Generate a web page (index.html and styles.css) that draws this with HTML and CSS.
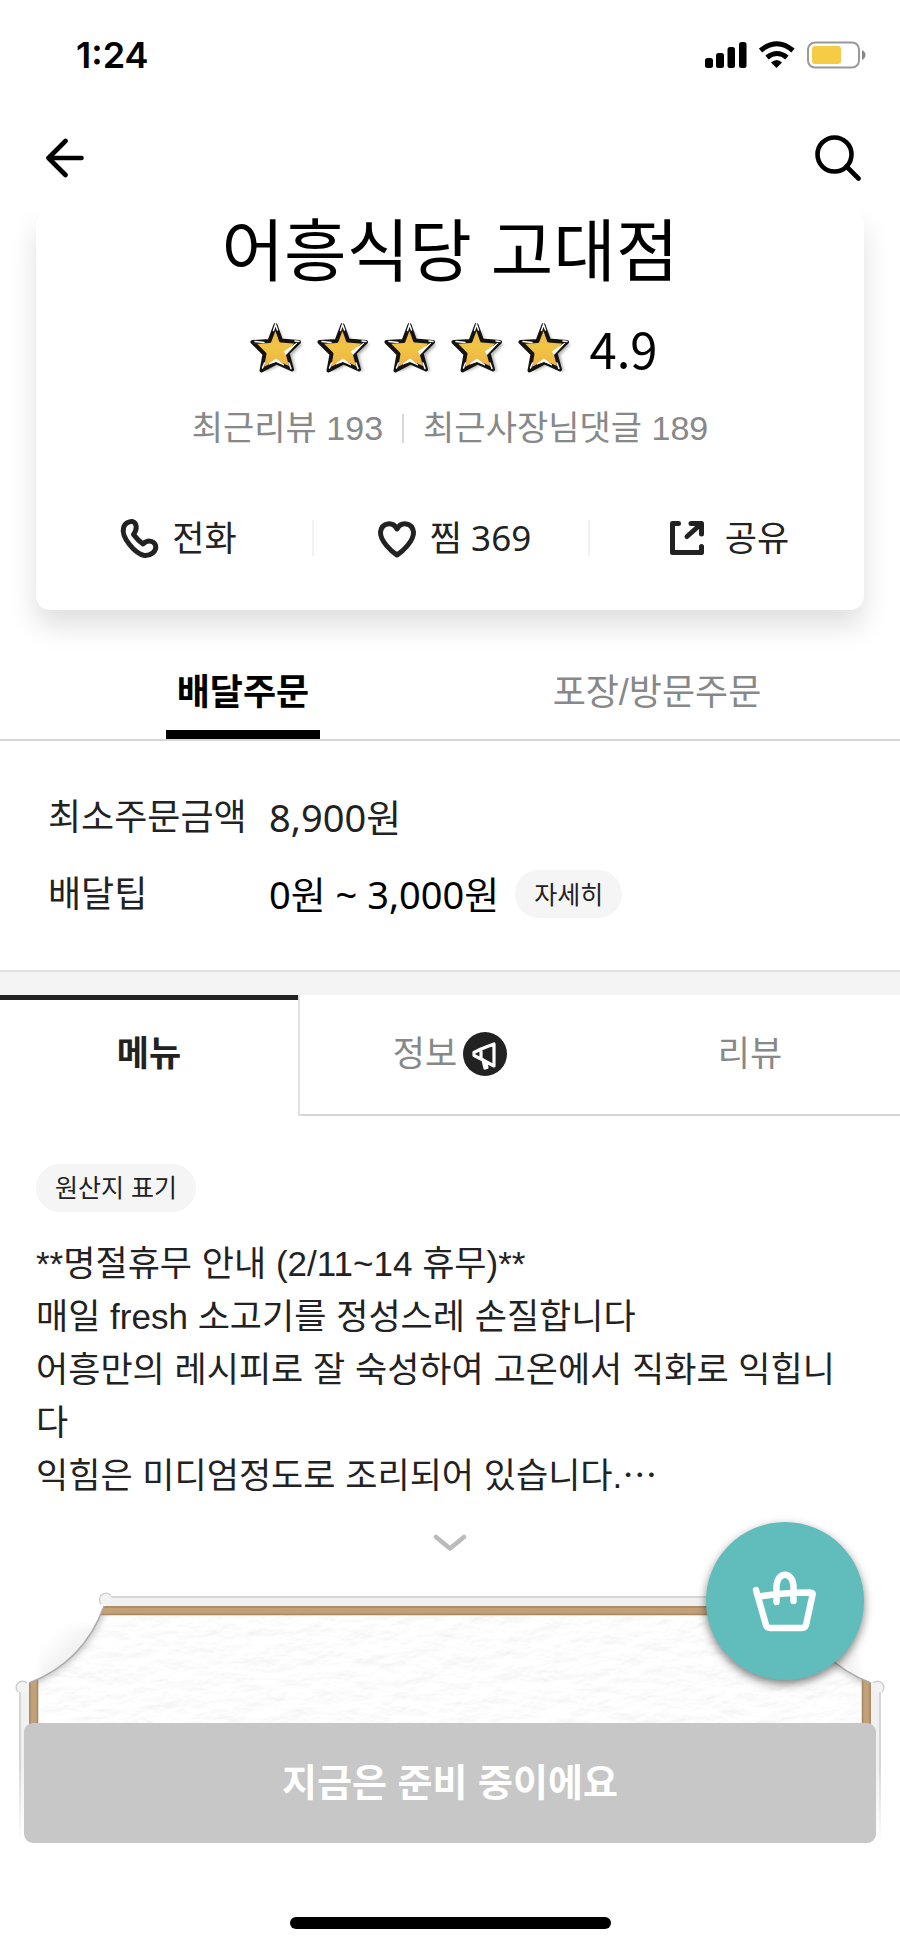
FILE: index.html
```html
<!DOCTYPE html>
<html lang="ko">
<head>
<meta charset="utf-8">
<meta name="viewport" content="width=device-width, initial-scale=1">
<title>어흥식당 고대점</title>
<link rel="stylesheet" href="styles.css">
</head>
<body>
<svg class="defs" aria-hidden="true">
  <defs>
    <linearGradient id="gold" x1="0" y1="0" x2="0" y2="1"><stop offset="0" stop-color="#f0b44c"/><stop offset=".5" stop-color="#efc443"/><stop offset="1" stop-color="#efae48"/></linearGradient>
    <filter id="soft" x="-30%" y="-30%" width="160%" height="160%"><feGaussianBlur stdDeviation="1.5"/></filter>
    <symbol id="star" viewBox="0 0 54 54">
      <path d="M26 6 32 20 50 21 39 32 43 49 27 42 12 49 16 33 4 22 21 21Z" fill="#777" opacity=".6" filter="url(#soft)" transform="translate(3 2)"/>
      <path d="M25.500 4 31 19.500 49 21 37.500 32 42 48.500 26.500 41.500 11.500 49.500 14.500 33 2.500 21 19.500 20Z" fill="url(#gold)" stroke="#151310" stroke-width="4" stroke-linejoin="round"/>
      <path d="M47 22 34.500 30.500 36 33.500ZM26 38 19 43 26 40.500 34 44Z" fill="#fff" stroke="#fff" stroke-linejoin="round"/>
      <path d="M23.500 9.500 25.500 3.500 27.500 9M5 20.500 14 21.500M45 20 49 20.500M12.500 47 14.500 42M41 47.500 39 42" fill="none" stroke="#fff" stroke-width="1.500" stroke-linecap="round"/>
    </symbol>
  </defs>
</svg>

<header class="top">
  <div class="status">
    <span class="time">1:24</span>
    <svg class="status-icons" viewBox="0 0 162 28" aria-hidden="true">
      <g fill="#000"><rect x="0" y="17" width="8" height="10" rx="2.500"/><rect x="11" y="12" width="8" height="15" rx="2.500"/><rect x="22.500" y="6" width="7.500" height="21" rx="2.500"/><rect x="34" y="1" width="7.500" height="26" rx="2.500"/></g>
      <g fill="none" stroke="#000" stroke-width="5"><path d="M55.500 9.500Q72 -4 88 9.500"/><path d="M62 16.500Q72 8.500 82 16.500"/></g>
      <path d="M66 21.500Q72 16.500 77 21.500L71.500 27Z"/>
      <rect x="103" y="1.500" width="51" height="25" rx="7" fill="#fff" stroke="#999" stroke-width="2"/>
      <rect x="107" y="5" width="29" height="18" rx="3" fill="#f6cc46"/>
      <path d="M157 9Q160.500 11 160.500 14T157 19Z" fill="#888"/>
    </svg>
  </div>
  <div class="nav">
    <button class="icon-btn" aria-label="뒤로">
      <svg width="40" height="40" viewBox="0 0 40 40" fill="none" stroke="#000" stroke-width="4.600" stroke-linecap="round" stroke-linejoin="round"><path d="M36.500 20H3.500M20.500 3 3.500 20 20.500 37"/></svg>
    </button>
    <button class="icon-btn" aria-label="검색">
      <svg width="46" height="46" viewBox="0 0 46 46" fill="none" stroke="#000" stroke-width="4.600" stroke-linecap="round"><circle cx="19.500" cy="19.500" r="17"/><path d="M31.500 31.500 43.500 43.500"/></svg>
    </button>
  </div>
</header>

<main>
  <section class="card">
    <h1>어흥식당 고대점</h1>
    <div class="rating">
      <svg class="star"><use href="#star"/></svg><svg class="star"><use href="#star"/></svg><svg class="star"><use href="#star"/></svg><svg class="star"><use href="#star"/></svg><svg class="star"><use href="#star"/></svg>
      <span class="score">4.9</span>
    </div>
    <div class="reviews"><span>최근리뷰 193</span><i class="bar"></i><span>최근사장님댓글 189</span></div>
    <div class="actions">
      <button><svg viewBox="0 0 48 48"><path d="M8.500 14C9.500 9 15 7 17.500 7.500 22 9 22.500 15 18.500 20.500Q23 26.500 28 30C32 26 38 26 40.500 31 42 38 35 42 29.500 41.500 20 40 6 23 8.500 14Z"/></svg>전화</button>
      <button><svg viewBox="0 0 48 48"><path d="M24 41C19 38 7 27 7.500 18 9 8 20 7.500 24 15 28 7.500 39 8 40.500 18 41 27 29 38 24 41Z"/></svg>찜 369</button>
      <button class="share"><svg viewBox="0 0 48 48"><path d="M15.500 9.500H9.500V38.500H38.500V32.500M28 9.500H38.500V20M24 22.500 38 10"/></svg>공유</button>
    </div>
  </section>

  <nav class="order-tabs">
    <button class="on">배달주문</button>
    <button>포장/방문주문</button>
  </nav>

  <dl class="info">
    <dt>최소주문금액</dt><dd>8,900원</dd>
    <dt>배달팁</dt><dd class="strong">0원 ~ 3,000원 <button class="pill">자세히</button></dd>
  </dl>

  <nav class="menu-tabs">
    <button class="on">메뉴</button>
    <button>정보
      <svg width="44" height="44" viewBox="0 0 44 44" aria-hidden="true"><circle cx="22" cy="22" r="22" fill="#222"/><g fill="none" stroke="#fff" stroke-width="3.200" stroke-linejoin="round" stroke-linecap="round"><path d="M31 12V34L18 27 11 23.500V20.500L18 17ZM18 17V27M20 28 22 36 24 35.500 22.500 30"/></g></svg>
    </button>
    <button>리뷰</button>
  </nav>

  <section class="notice">
    <button class="pill">원산지 표기</button>
    <p>**명절휴무 안내 (2/11~14 휴무)**<br>매일 fresh 소고기를 정성스레 손질합니다<br>어흥만의 레시피로 잘 숙성하여 고온에서 직화로 익힙니다<br>익힘은 미디엄정도로 조리되어 있습니다.⋯</p>
    <button class="more" aria-label="더보기"><svg width="34" height="18" viewBox="0 0 34 18" fill="none" stroke="#bbb" stroke-width="4.500" stroke-linecap="round" stroke-linejoin="round"><path d="M3 3 17 14.500 31 3"/></svg></button>
  </section>

  <svg class="frame" viewBox="0 0 900 260" aria-hidden="true">
    <defs>
      <filter id="paper" x="0" y="0" width="100%" height="100%">
        <feTurbulence type="fractalNoise" baseFrequency=".035 .07" numOctaves="4" seed="6" result="n"/>
        <feDiffuseLighting in="n" surfaceScale=".7" diffuseConstant="1.110" lighting-color="#fff"><feDistantLight azimuth="250" elevation="62"/></feDiffuseLighting>
        <feComposite in2="SourceGraphic" operator="in"/>
      </filter>
      <filter id="blur" x="-30%" y="-30%" width="160%" height="160%"><feGaussianBlur stdDeviation="3"/></filter>
      <clipPath id="sheet"><path d="M104 16H796Q816 72 871 93V260H29V93Q84 72 104 16Z"/></clipPath>
      <linearGradient id="haze" x1="0" y1="0" x2="1" y2="1"><stop offset=".2" stop-color="#efefef" stop-opacity="0"/><stop offset=".6" stop-color="#efefef"/></linearGradient>
      <clipPath id="cut"><path d="M104 16Q84 72 29 93V16Z"/></clipPath>
      <g id="side">
        <g clip-path="url(#cut)"><path d="M40 36H96V90H40Z" fill="url(#haze)" filter="url(#blur)"/></g>
        <path d="M29 93V260H38V89Z" fill="#c2a178"/><path d="M30 93V260M37.500 90V260" stroke="#a58863" stroke-width="1.500"/>
        <path d="M19 97V260H29V93Z" fill="#f1f1f1"/><path d="M20 102V260" stroke="#d6d6d6" stroke-width="2"/>
        <circle cx="22" cy="97" r="5.500" fill="#f3f3f3"/><path d="M18 102A6 6 0 0 1 27 93" fill="none" stroke="#d0d0d0" stroke-width="1.500"/>
        <circle cx="105.500" cy="9" r="6" fill="#f3f3f3"/><path d="M101 14A6 6 0 0 1 111 5.500" fill="none" stroke="#d0d0d0" stroke-width="1.500"/>
        <path d="M104 16Q84 72 29 93" fill="none" stroke="#aaa" stroke-width="1.500"/>
      </g>
    </defs>
    <g clip-path="url(#sheet)">
      <rect x="29" y="16" width="842" height="244" fill="#fff" filter="url(#paper)"/>
      <path d="M104 16Q84 72 29 93M796 16Q816 72 871 93" fill="none" stroke="#888" stroke-width="6" opacity=".5" filter="url(#blur)"/>
      <path d="M90 16H810V25H90Z" fill="#c2a178"/><path d="M90 17H810M90 24.500H810" stroke="#a58863" stroke-width="1.500"/>
    </g>
    <path d="M106 6H794V16H106Z" fill="#f1f1f1"/><path d="M110 7H790" stroke="#d6d6d6" stroke-width="2"/>
    <use href="#side"/><use href="#side" transform="translate(900 0) scale(-1 1)"/>
  </svg>
</main>

<div class="dock">
  <button class="fab" aria-label="장바구니">
    <svg width="66" height="66" viewBox="0 0 66 66" fill="none" stroke="#fff" stroke-width="6.400" stroke-linecap="round" stroke-linejoin="round"><path d="M4 22 14 57Q15 60 18 60H50Q53 60 54 57L60.500 27Q61.500 24.500 58 24.500 32 24.500 7 28.500M24.500 34V18C25.500 3 40.500 3 41.500 18V33"/></svg>
  </button>
  <button class="closed" disabled>지금은 준비 중이에요</button>
  <div class="home"></div>
</div>
</body>
</html>
```
FILE: styles.css
```css
* { box-sizing: border-box; }
body {
  margin: 0;
  min-height: 100vh;
  background: #fff;
  color: #222;
  font-family: "Liberation Sans", "Noto Sans CJK KR", sans-serif;
  font-size: 35px;
  line-height: 44px;
}
button {
  margin: 0;
  padding: 0;
  border: 0;
  background: none;
  color: inherit;
  font: inherit;
}
svg { display: block; }
.defs { position: absolute; width: 0; height: 0; }

.top { position: relative; z-index: 1; height: 211px; background: #fff; }
.status {
  display: flex;
  align-items: center;
  justify-content: space-between;
  height: 110px;
  padding: 0 33px 0 76px;
}
.time { color: #000; font-family: Inter, sans-serif; font-size: 36px; font-weight: 600; }
.status-icons { width: 162px; height: 28px; }
.nav {
  display: flex;
  align-items: center;
  justify-content: space-between;
  height: 96px;
  padding: 0 39px 0 45px;
}

.card {
  margin: 0 36px;
  padding-bottom: 50px;
  border-radius: 14px;
  background: #fff;
  box-shadow: 0 16px 28px rgba(0, 0, 0, .13);
  text-align: center;
}
.card h1 {
  margin: 0 0 33px;
  color: #000;
  font-family: "Noto Sans CJK KR", sans-serif;
  font-size: 68px;
  font-weight: 400;
  line-height: 72px;
}
.rating {
  display: flex;
  align-items: center;
  justify-content: center;
  gap: 13px;
  height: 64px;
  padding-left: 8px;
}
.star { width: 54px; height: 54px; }
.score { padding-left: 4px; color: #000; font-family: "Noto Sans CJK KR", sans-serif; font-size: 49px; line-height: 60px; }
.reviews {
  display: flex;
  align-items: center;
  justify-content: center;
  gap: 19px;
  margin: 26px 0 66px;
  color: #888;
  font-size: 34px;
}
.bar { width: 2px; height: 29px; background: #d8d8d8; }
.actions { display: grid; grid-template-columns: repeat(3, 1fr); }
.actions button {
  display: flex;
  align-items: center;
  justify-content: center;
  gap: 9px;
  height: 44px;
  padding-left: 4px;
  font-family: "Noto Sans", "Noto Sans CJK KR", sans-serif;
}
.actions button + button {
  background: linear-gradient(#f2f2f2, #f2f2f2) left center / 2px 36px no-repeat;
}
.actions .share { gap: 14px; padding-left: 0; }
.actions svg { width: 48px; height: 48px; fill: none; stroke: #222; stroke-width: 5; stroke-linecap: round; stroke-linejoin: round; }

.order-tabs {
  display: grid;
  grid-template-columns: 1fr 1fr;
  justify-items: center;
  margin-top: 46px;
  padding: 0 36px;
  border-bottom: 2px solid #d6d6d6;
}
.order-tabs button { padding: 0 11px; border-bottom: 9px solid transparent; color: #888; font-size: 36px; line-height: 74px; }
.order-tabs .on { border-color: #000; color: #000; font-weight: 700; }

.info {
  display: grid;
  grid-template-columns: 221px 1fr;
  row-gap: 29px;
  margin: 0;
  padding: 52px 48px;
  border-bottom: 2px solid #e2e2e2;
  font-family: "Noto Sans", "Noto Sans CJK KR", sans-serif;
  font-size: 36px;
  line-height: 48px;
}
.info dd { display: flex; align-items: center; gap: 16px; margin: 0; font-size: 38px; }
.info .strong { color: #000; }
.pill {
  height: 48px;
  padding: 0 19px;
  border-radius: 24px;
  background: #f5f5f5;
  color: #222;
  font-size: 25px;
  line-height: 46px;
}

.menu-tabs {
  display: grid;
  grid-template-columns: repeat(3, 1fr);
  border-top: 23px solid #f4f4f4;
}
.menu-tabs button {
  display: flex;
  align-items: center;
  justify-content: center;
  gap: 6px;
  height: 121px;
  padding-bottom: 2px;
  border-bottom: 2px solid #d6d6d6;
  color: #888;
}
.menu-tabs .on {
  border-right: 2px solid #e2e2e2;
  border-bottom: 0;
  padding-bottom: 4px;
  box-shadow: inset 0 5px #222;
  color: #222;
  font-weight: 700;
}

.notice { display: flex; flex-direction: column; align-items: flex-start; padding: 48px 36px 0; }
.notice p { margin: 25px 0 32px; line-height: 53px; word-break: break-all; }
.more { align-self: center; }

.frame { width: 100%; margin-top: 38px; }

.dock {
  position: fixed;
  right: 0;
  bottom: 0;
  left: 0;
  padding: 0 24px 20px;
  background: linear-gradient(transparent 0, transparent 40px, #fff 120px);
}
.fab {
  position: absolute;
  right: 36px;
  bottom: calc(100% + 43px);
  display: grid;
  place-items: center;
  width: 158px;
  height: 158px;
  border-radius: 50%;
  background: #61bdbb;
  box-shadow: 0 4px 10px rgba(0, 0, 0, .5);
}
.closed {
  display: block;
  width: 100%;
  height: 120px;
  margin-bottom: 74px;
  border-radius: 9px;
  background: #c7c7c7;
  color: #fff;
  font-size: 38px;
  font-weight: 700;
}
.home { width: 321px; height: 12px; margin: 0 auto; border-radius: 6px; background: #000; }
```
